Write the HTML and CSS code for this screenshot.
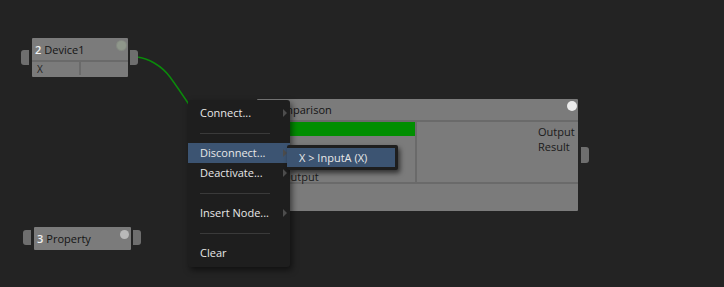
FILE: index.html
```html
<!DOCTYPE html>
<html lang="en">
<head>
  <meta charset="UTF-8">
  <title>Node Graph - Context Menu</title>
  <link rel="stylesheet" href="styles.css">
</head>
<body>

  <div class="canvas">

    <!-- wires sit under the nodes and menus -->
    <svg class="wires" width="724" height="287" viewBox="0 0 724 287">
      <path d="M137,57 C148,58 162,66 170,77 S184,97 192,109" />
    </svg>

    <div class="node node-device">
      <span class="port port-in"></span>
      <div class="node-head">
        <span class="node-num">2</span><span class="node-name">Device1</span>
        <span class="node-dot dot-dim"></span>
      </div>
      <div class="node-row">
        <div class="cell">X</div>
        <div class="cell"></div>
      </div>
      <span class="port port-out"></span>
    </div>

    <div class="node node-property">
      <span class="port port-in"></span>
      <div class="node-head">
        <span class="node-num">3</span><span class="node-name">Property</span>
        <span class="node-dot dot-light"></span>
      </div>
      <span class="port port-out"></span>
    </div>

    <div class="node node-compare">
      <div class="node-head">
        <span class="node-num">1</span><span class="node-name">Comparison</span>
        <span class="node-dot dot-white"></span>
      </div>
      <div class="compare-body">
        <div class="compare-in">
          <div class="bar"></div>
          <div class="in-label">Output</div>
        </div>
        <div class="compare-out">
          <div class="out-label">Output</div>
          <div class="out-label">Result</div>
        </div>
      </div>
      <div class="compare-foot"></div>
      <span class="port port-result"></span>
    </div>

    <ul class="menu">
      <li class="item has-sub">Connect...</li>
      <li class="sep"></li>
      <li class="item has-sub active">Disconnect...</li>
      <li class="item has-sub">Deactivate...</li>
      <li class="sep"></li>
      <li class="item has-sub">Insert Node...</li>
      <li class="sep"></li>
      <li class="item">Clear</li>
    </ul>

    <ul class="menu submenu">
      <li class="item active">X &gt; InputA (X)</li>
    </ul>

  </div>

</body>
</html>
```

FILE: styles.css
```css
:root {
  --canvas: #232323;
  --node: #7b7b7b;
  --node-line: #6a6a6a;
  --menu: #1e1e1e;
  --hl: #3c5472;
}

body {
  margin: 0;
  background: var(--canvas);
  font-family: 'Open Sans', 'Noto Sans', sans-serif;
  font-size: 11px;
  color: #111;
}

.canvas {
  position: relative;
  width: 724px;
  height: 287px;
  overflow: hidden;
}

.wires {
  position: absolute;
  left: 0;
  top: 0;
}

.wires path {
  fill: none;
  stroke: #0b8a0b;
  stroke-width: 1.5;
}

/* nodes */

.node {
  position: absolute;
  background: var(--node);
  box-sizing: border-box;
  border-radius: 1px;
}

.node-head {
  position: relative;
  display: flex;
  align-items: center;
  height: 24px;
  padding-left: 3px;
  box-sizing: border-box;
}

.node-num {
  color: #f2f2f2;
  font-weight: 600;
  margin-right: 3px;
}

.node-name {
  color: #141414;
}

.node-dot {
  position: absolute;
  right: 2px;
  top: 3px;
  width: 9px;
  height: 9px;
  border-radius: 50%;
}

.dot-dim {
  background: #8f978b;
  box-shadow: 0 0 0 1px #858a82;
}

.dot-light {
  background: #b9b9b9;
}

.dot-white {
  background: #ececec;
  right: 1px;
  top: 2px;
  width: 10px;
  height: 10px;
}

.port {
  position: absolute;
  width: 8px;
  height: 15px;
  background: #6e6e6e;
}

.port-in {
  left: -11px;
  border-radius: 3px 0 0 3px;
}

.port-out {
  right: -10px;
  border-radius: 0 3px 3px 0;
}

.node-device {
  left: 32px;
  top: 38px;
  width: 96px;
  height: 39px;
}

.node-device .port {
  top: 12px;
}

.node-device .node-head {
  border-bottom: 2px solid var(--node-line);
}

.node-row {
  display: flex;
  height: 13px;
}

.cell {
  flex: 1;
  padding: 1px 0 0 5px;
  line-height: 13px;
  font-size: 10px;
  color: #222;
}

.cell + .cell {
  border-left: 2px solid var(--node-line);
}

.node-property {
  left: 34px;
  top: 227px;
  width: 97px;
  height: 23px;
}

.node-property .node-head {
  height: 23px;
}

.node-property .port {
  top: 3px;
}

.node-compare {
  left: 257px;
  top: 99px;
  width: 321px;
  height: 112px;
}

.node-compare .node-head {
  height: 23px;
  border-bottom: 2px solid var(--node-line);
}

.compare-body {
  display: flex;
  height: 60px;
  border-bottom: 2px solid var(--node-line);
}

.compare-in {
  flex: none;
  width: 158px;
  border-right: 2px solid var(--node-line);
}

.bar {
  height: 14px;
  background: #008e00;
}

.in-label {
  margin-top: 33px;
  padding-left: 25px;
  line-height: 15px;
  color: #1a1a1a;
}

.compare-out {
  flex: 1;
  padding: 2px 0 0 121px;
}

.out-label {
  line-height: 15px;
  white-space: nowrap;
  color: #1a1a1a;
}

.compare-foot {
  height: 25px;
}

.port-result {
  right: -11px;
  top: 48px;
  width: 8px;
  height: 16px;
  border-radius: 0 3px 3px 0;
}

/* context menu */

.menu {
  position: absolute;
  left: 188px;
  top: 100px;
  width: 102px;
  margin: 0;
  padding: 3px 0 4px;
  list-style: none;
  background: var(--menu);
  border-radius: 3px;
  box-shadow: 2px 3px 6px rgba(0, 0, 0, 0.55);
  color: #e8e8e8;
}

.item {
  position: relative;
  height: 20px;
  line-height: 20px;
  padding-left: 12px;
  white-space: nowrap;
}

.item.active {
  background: var(--hl);
}

.has-sub::after {
  content: '';
  position: absolute;
  right: 3px;
  top: 6px;
  border-left: 4px solid #4d4d4d;
  border-top: 4px solid transparent;
  border-bottom: 4px solid transparent;
}

.sep {
  height: 20px;
  display: flex;
  align-items: center;
  padding: 0 20px 0 12px;
}

.sep::before {
  content: '';
  flex: 1;
  height: 1px;
  background: #3a3a3a;
}

.submenu {
  left: 287px;
  top: 145px;
  width: 108px;
  padding: 3px 3px 3px 0;
  border-radius: 2px;
  box-shadow: 2px 3px 5px rgba(0, 0, 0, 0.6);
}

.submenu .item {
  height: 19px;
  line-height: 19px;
}
```
